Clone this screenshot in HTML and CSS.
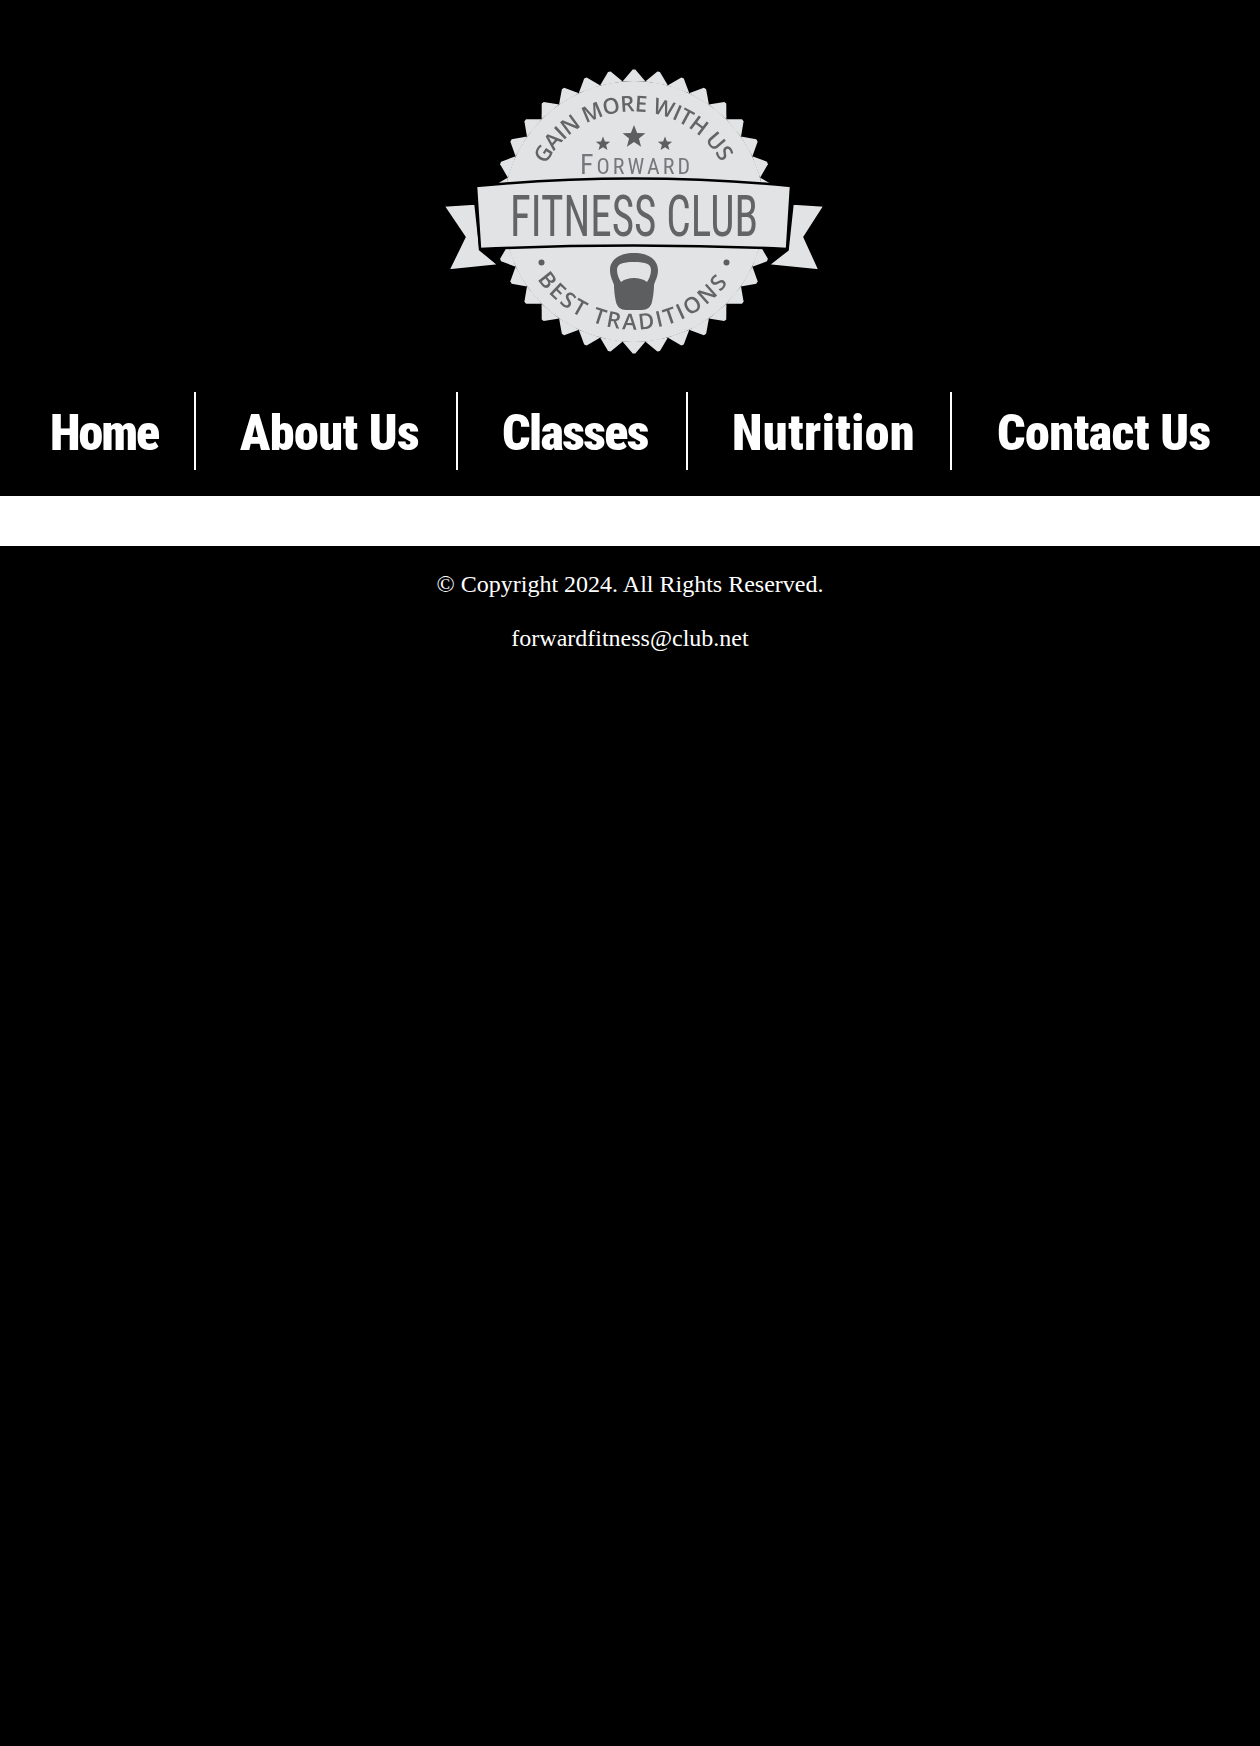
FILE: index.html
```html
<!DOCTYPE html>
<html lang="en">
<head>
<meta charset="utf-8">
<title>Forward Fitness Club</title>
<link rel="stylesheet" href="styles.css">
</head>
<body>
<header class="site-header">
  <div class="logo-wrap">
    <svg class="logo" viewBox="0 0 400 320" width="400" height="320" role="img" aria-label="Forward Fitness Club logo">
      <defs>
        <polygon id="tooth" points="-1.3,-142 1.3,-142 11.5,-130 -11.5,-130"/>
        <g id="teeth6">
          <use href="#tooth"/>
          <use href="#tooth" transform="rotate(10)"/>
          <use href="#tooth" transform="rotate(20)"/>
          <use href="#tooth" transform="rotate(30)"/>
          <use href="#tooth" transform="rotate(40)"/>
          <use href="#tooth" transform="rotate(50)"/>
        </g>
        <polygon id="star" points="0,-10 2.6,-3.3 9.5,-3.1 4.1,1.3 5.9,8.1 0,4.2 -5.9,8.1 -4.1,1.3 -9.5,-3.1 -2.6,-3.3"/>
        <path id="arc-top" d="M115.7,114.5 A100,100 0 0 1 292.3,114.5"/>
        <path id="arc-bottom" d="M107.3,229.2 A118,118 0 0 0 300.7,229.2"/>
      </defs>
      <g class="burst" transform="translate(204 161.5)">
        <circle r="130.5"/>
        <use href="#teeth6"/>
        <use href="#teeth6" transform="rotate(60)"/>
        <use href="#teeth6" transform="rotate(120)"/>
        <use href="#teeth6" transform="rotate(180)"/>
        <use href="#teeth6" transform="rotate(240)"/>
        <use href="#teeth6" transform="rotate(300)"/>
      </g>
      <polygon class="tail" points="14,156 45,154 50,200 68,215 19,220 35,187"/>
      <polygon class="tail" points="394,156 363,154 358,200 339,215 389,220 374,187"/>
      <path class="banner" d="M46,136 Q204,121 361,136 L357,199 Q204,192 50,199 Z"/>
      <use class="mark" href="#star" transform="translate(204 87) scale(1.2)"/>
      <use class="mark" href="#star" transform="translate(173 94) scale(.75)"/>
      <use class="mark" href="#star" transform="translate(235 94) scale(.75)"/>
      <text class="arc-text"><textPath href="#arc-top" textLength="214" lengthAdjust="spacing">GAIN MORE WITH US</textPath></text>
      <text class="forward" x="150" y="124" textLength="110"><tspan class="forward-cap">F</tspan>ORWARD</text>
      <text class="fitness" x="80" y="186" textLength="248" lengthAdjust="spacingAndGlyphs">FITNESS CLUB</text>
      <path class="mark" fill-rule="evenodd" d="M204,203 C219,203 228,210 228,220 C228,227 225,231 224,235 C224,240 223,248 222,252 C221,257 217,260 212,260 L196,260 C191,260 187,257 186,252 C185,248 184,240 184,235 C183,231 180,227 180,220 C180,210 189,203 204,203 Z M204,212 C192,212 187,214 187,220 C187,225 189,229 191,232 C195,229 199,228 204,228 C209,228 213,229 217,232 C219,229 221,225 221,220 C221,214 216,212 204,212 Z"/>
      <circle class="mark" cx="111.5" cy="212.5" r="3"/>
      <circle class="mark" cx="296.5" cy="212.5" r="3"/>
      <text class="arc-text"><textPath href="#arc-bottom" textLength="222" lengthAdjust="spacing">BEST TRADITIONS</textPath></text>
    </svg>
  </div>
  <nav class="main-nav">
    <a class="nav-item" href="#">Home</a>
    <a class="nav-item" href="#">About Us</a>
    <a class="nav-item" href="#">Classes</a>
    <a class="nav-item" href="#">Nutrition</a>
    <a class="nav-item" href="#">Contact Us</a>
  </nav>
</header>
<main class="content"></main>
<footer class="site-footer">
  <p>© Copyright 2024. All Rights Reserved.</p>
  <p>forwardfitness@club.net</p>
</footer>
</body>
</html>
```
FILE: styles.css
```css
html, body {
  margin: 0;
  background: #000;
}
body {
  min-height: 1746px;
  display: flex;
  flex-direction: column;
  font-family: "Liberation Serif", "Times New Roman", serif;
  color: #fff;
}
.site-header {
  height: 496px;
  background: #000;
}
.logo-wrap {
  display: flex;
  justify-content: center;
  padding-top: 50px;
}
.logo {
  display: block;
  filter: blur(0.4px);
}
.burst { fill: #e2e3e4; }
.tail {
  fill: #e2e3e4;
  stroke: #000;
  stroke-width: 1.5;
}
.banner {
  fill: #e2e3e4;
  stroke: #000;
  stroke-width: 2.5;
}
.mark { fill: #5d5e60; }
.arc-text {
  font-family: "Open Sans", sans-serif;
  font-weight: 600;
  font-size: 22px;
  fill: #636466;
}
.forward {
  font-family: Roboto, sans-serif;
  font-stretch: 75%;
  font-weight: 400;
  font-size: 22px;
  fill: #77787b;
}
.forward-cap { font-size: 28px; }
.fitness {
  font-family: Roboto, sans-serif;
  font-stretch: 75%;
  font-weight: 400;
  font-size: 58px;
  fill: #636466;
}
.main-nav {
  display: grid;
  grid-template-columns: 191px 262px 230px 264px 1fr;
  margin-top: 22px;
  margin-left: 5px;
}
.nav-item {
  display: flex;
  align-items: center;
  box-sizing: border-box;
  height: 78px;
  padding-top: 4px;
  padding-left: 44px;
  border-right: 2px solid #fff;
  font-family: Roboto, sans-serif;
  font-stretch: 75%;
  font-size: 50px;
  font-weight: 900;
  color: #fff;
  text-decoration: none;
  white-space: nowrap;
}
.nav-item:nth-child(1) { padding-left: 45px; letter-spacing: -2px; }
.nav-item:nth-child(2) { letter-spacing: -0.5px; }
.nav-item:nth-child(3) { letter-spacing: -1.6px; }
.nav-item:nth-child(4) { letter-spacing: 0.4px; }
.nav-item:nth-child(5) { padding-left: 45px; letter-spacing: -0.5px; border-right: 0; }
.content {
  height: 50px;
  background: #fff;
}
.site-footer {
  flex: 1;
  background: #000;
  text-align: center;
  font-size: 24px;
  padding-top: 25px;
}
.site-footer p {
  margin: 0 0 27px;
}
```
